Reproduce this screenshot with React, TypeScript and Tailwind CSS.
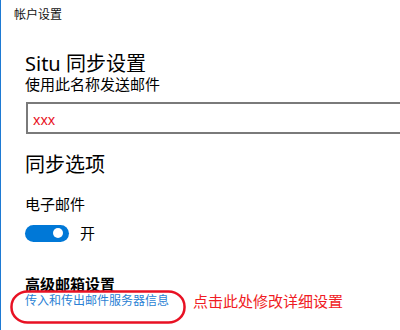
import React from "react";

const cjk = { fontFamily: '"Noto Sans", "Noto Sans CJK SC", sans-serif' };

export default function App() {
  return (
    <div
      className="relative w-[400px] h-[330px] overflow-hidden bg-white border-l border-[#1e7ad3] text-black"
      style={cjk}
    >
      <div className="pl-[13px] pt-[7px] text-[12px] leading-[16px] text-[#111]">帐户设置</div>
      <div className="pl-[24px]">
        <div className="mt-[30px] text-[20px] leading-[22px]">Situ 同步设置</div>
        <div className="text-[15px] leading-[18px]">使用此名称发送邮件</div>
        <div className="mt-[9px] ml-[1px] h-[32px] w-[420px] border-2 border-[#7a7a7a] flex items-center pl-[5px] pt-[3px]">
          <span className="text-[14px] leading-[16px] text-[#e81123]">xxx</span>
        </div>
        <div className="mt-[19px] text-[20px] leading-[24px]">同步选项</div>
        <div className="mt-[17px] text-[15px] leading-[20px]">电子邮件</div>
        <div className="mt-[9px] flex items-center gap-[11px]">
          <div className="w-[44px] h-[17px] rounded-full bg-[#0078d7] flex items-center justify-end pr-[6px]">
            <div className="w-[10px] h-[10px] rounded-full bg-white" />
          </div>
          <span className="text-[15px] leading-[20px]">开</span>
        </div>
        <div className="mt-[32px] text-[15px] leading-[18px] font-bold">高级邮箱设置</div>
        <div className="flex items-center mt-[-1px]">
          <span className="text-[12px] leading-[16px] text-[#2a7fd4]">传入和传出邮件服务器信息</span>
          <span className="ml-[24px] text-[15px] leading-[18px] text-[#f01c24]">点击此处修改详细设置</span>
        </div>
      </div>
      <svg className="absolute left-[9px] top-[290px]" width="176" height="34" viewBox="0 0 176 34">
        <rect x="1.5" y="1.5" width="173" height="31" rx="16" ry="15" fill="none" stroke="#e81123" strokeWidth="2.5" />
      </svg>
    </div>
  );
}
